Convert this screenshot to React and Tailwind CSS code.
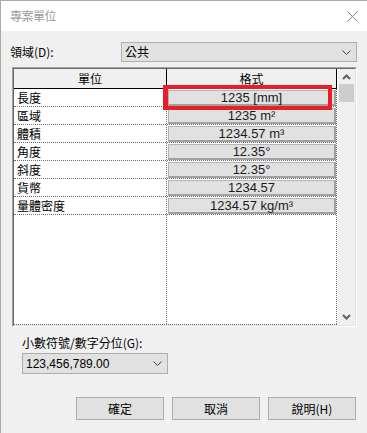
import React from "react";

const rows = [
  ["長度", "1235 [mm]"],
  ["區域", "1235 m²"],
  ["體積", "1234.57 m³"],
  ["角度", "12.35°"],
  ["斜度", "12.35°"],
  ["貨幣", "1234.57"],
  ["量體密度", "1234.57 kg/m³"],
];

function Chevron({ className = "" }) {
  return (
    <svg width="9" height="5" viewBox="0 0 9 5" className={className}>
      <path d="M0.5 0.5 L4.5 4.5 L8.5 0.5" fill="none" stroke="#404040" strokeWidth="1" />
    </svg>
  );
}

function ScrollArrow({ up }) {
  return (
    <svg width="9" height="6" viewBox="0 0 9 6">
      <path
        d={up ? "M1 5 L4.5 1.5 L8 5" : "M1 1 L4.5 4.5 L8 1"}
        fill="none"
        stroke="#606060"
        strokeWidth="2"
      />
    </svg>
  );
}

export default function App() {
  return (
    <div className="relative w-[367px] h-[433px] bg-[#f0f0f0] border-l border-t border-[#aaaaaa] flex flex-col overflow-hidden font-['Noto_Sans_CJK_TC',sans-serif] text-[12px] text-black">
      {/* Title bar */}
      <div className="h-[30px] bg-white flex items-center justify-between pl-[9px] pr-[9px] flex-none">
        <span className="text-[#9a9a9a] text-[12px] leading-[14px] tracking-[-0.5px]">專案單位</span>
        <svg width="11" height="11" viewBox="0 0 11 11">
          <path d="M0.5 0.5 L10.5 10.5 M10.5 0.5 L0.5 10.5" stroke="#808080" strokeWidth="1" />
        </svg>
      </div>

      <div className="flex flex-col pl-[9px] pr-[10px]">
        {/* Domain row */}
        <div className="mt-[11px] h-[20px] flex items-center">
          <div className="w-[111px] flex-none leading-[14px]">領域(D):</div>
          <div className="flex-1 h-[20px] border border-[#adadad] bg-[#e1e1e1] flex items-center justify-between pl-[3px] pr-[5px]">
            <span className="leading-[14px]">公共</span>
            <Chevron />
          </div>
        </div>

        {/* Grid */}
        <div className="mt-[5px] ml-[2px] h-[260px] flex border-t border-l border-[#a0a0a0] border-r border-b border-r-white border-b-white">
          <div className="flex-1 flex border-t border-l border-[#696969] border-r border-b border-r-[#e3e3e3] border-b-[#e3e3e3]">
            {/* table area */}
            <div className="w-[324px] flex flex-col bg-white">
              {/* header */}
              <div className="flex h-[20px] border-b border-black bg-[#f0f0f0] w-[323px]">
                <div className="w-[153px] border-r border-black flex items-center justify-center leading-[14px]">單位</div>
                <div className="w-[170px] border-r border-black flex items-center justify-center leading-[14px]">格式</div>
              </div>
              {/* body */}
              <div className="flex-1 flex w-[323px] border-b border-dotted border-[#6d6d6d]">
                <div className="w-[153px] border-r border-dotted border-[#6d6d6d] flex flex-col">
                  {rows.map(([n]) => (
                    <div key={n} className="h-[18px] border-b border-dotted border-[#6d6d6d] pl-[3px] flex items-center leading-[14px]">
                      {n}
                    </div>
                  ))}
                </div>
                <div className="w-[170px] border-r border-dotted border-[#6d6d6d] flex flex-col">
                  {rows.map(([n, v]) => (
                    <div key={n} className="h-[18px] border-b border-dotted border-[#6d6d6d] flex flex-col">
                      <div className="ml-[1px] mt-[1px] h-[16px] bg-[#e1e1e1] border-l border-t border-[#b4b4b4] border-r-2 border-b-2 border-r-[#a0a0a0] border-b-[#a0a0a0] flex items-center justify-center font-['Liberation_Sans','Noto_Sans_CJK_TC',sans-serif] text-[13px] leading-[13px] text-[#1a1a1a]">
                        {v}
                      </div>
                    </div>
                  ))}
                </div>
              </div>
            </div>
            {/* scrollbar */}
            <div className="w-[17px] bg-[#f0f0f0] flex flex-col">
              <div className="h-[15px] flex items-center justify-center">
                <ScrollArrow up />
              </div>
              <div className="mx-[1px] h-[18px] bg-[#cdcdcd]" />
              <div className="flex-1" />
              <div className="h-[17px] flex items-center justify-center">
                <ScrollArrow />
              </div>
            </div>
          </div>
        </div>

        {/* Decimal label */}
        <div className="mt-[8px] ml-[12px] h-[16px] leading-[16px]">小數符號/數字分位(G):</div>
        <div className="mt-[2px] ml-[12px] w-[146px] h-[21px] border border-[#adadad] bg-[#e1e1e1] flex items-center justify-between pl-[3px] pr-[5px]">
          <span className="font-['Liberation_Sans','Noto_Sans_CJK_TC',sans-serif] text-[12px] leading-[14px]">123,456,789.00</span>
          <Chevron />
        </div>

        {/* Buttons */}
        <div className="mt-[23px] flex justify-end gap-[8px] mr-[1px]">
          {["確定", "取消", "說明(H)"].map((b) => (
            <div key={b} className="w-[88px] h-[23px] border border-[#adadad] bg-[#e1e1e1] flex items-center justify-center leading-[14px]">
              {b}
            </div>
          ))}
        </div>
      </div>

      {/* Red highlight */}
      <div className="absolute left-[162px] top-[84px] w-[169px] h-[25px] border-[4px] border-l-[5px] border-[#e81f27]" />
    </div>
  );
}
